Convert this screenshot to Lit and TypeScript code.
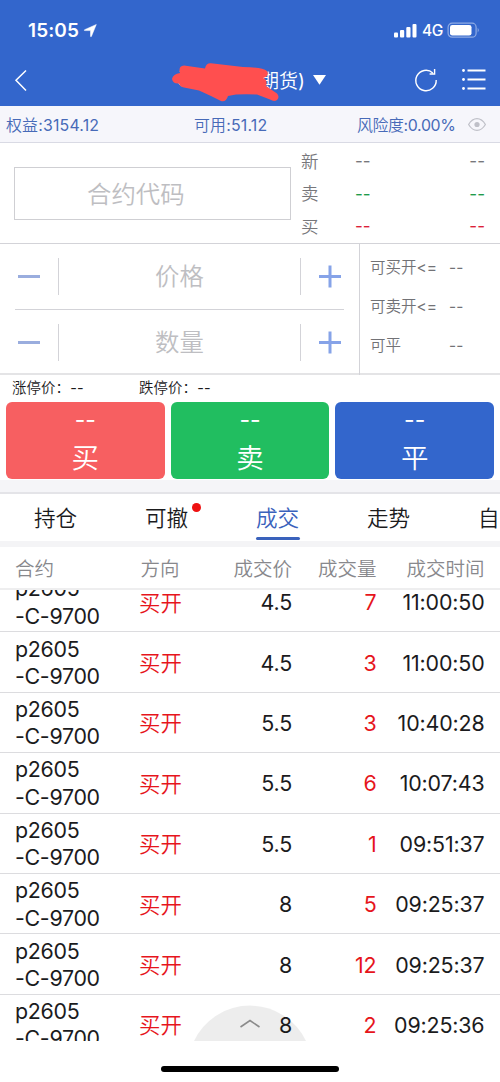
import { LitElement, html, css, svg } from "lit";
import { customElement } from "lit/decorators.js";

interface Trade { price: string; volume: string; time: string; }

const TRADES: Trade[] = [
  { price: "4.5", volume: "7", time: "11:00:50" },
  { price: "4.5", volume: "3", time: "11:00:50" },
  { price: "5.5", volume: "3", time: "10:40:28" },
  { price: "5.5", volume: "6", time: "10:07:43" },
  { price: "5.5", volume: "1", time: "09:51:37" },
  { price: "8", volume: "5", time: "09:25:37" },
  { price: "8", volume: "12", time: "09:25:37" },
  { price: "8", volume: "2", time: "09:25:36" },
];

const minus = svg`<path d="M0 11.5H22" />`;
const plus = svg`<path d="M0 11.5H22M11 .5V22.5" />`;

@customElement("app-root")
export class AppRoot extends LitElement {
  static styles = css`
    :host {
      display: flex;
      flex-direction: column;
      width: 500px;
      height: 1082px;
      overflow: hidden;
      background: #fff;
      color: #1b1b1d;
      font-family: Inter, "Noto Sans CJK SC DemiLight", "Noto Sans CJK SC", sans-serif;
      font-weight: 400;
      font-size: 16px;
    }
    * { box-sizing: border-box; }
    svg { display: block; flex: none; overflow: visible; }
    .top { background: #3366cc; color: #fff; height: 106px; flex: none; }
    .status { height: 54px; padding: 7px 20px 0 28px; display: flex; align-items: center; }
    .clock { font-size: 19px; font-weight: 600; width: 52px; white-space: nowrap; letter-spacing: 0.1px; }
    .arrow { margin-left: 4px; }
    .signal { margin-left: auto; }
    .net { font-size: 15.5px; font-weight: 500; margin: 0 5px 0 5px; width: 21px; white-space: nowrap; letter-spacing: -0.3px; }
    .nav { height: 52px; display: grid; grid-template-columns: 172px 1fr 85px; align-items: center; }
    .back { margin-left: 15px; }
    .account { position: relative; display: flex; align-items: center; height: 52px; padding-left: 88px; font-size: 19px; }
    .owner { padding-bottom: 2px; }
    .caret { margin-left: 8px; }
    .redact { position: absolute; left: 0; top: 0; }
    .tools { display: flex; align-items: center; gap: 25px; }
    .funds {
      flex: none; height: 37px; background: #f6f6fb; border-bottom: 1px solid #d9dae4; color: #476ab8;
      display: grid; grid-template-columns: 188px 163px 106px 1fr; padding: 0 6px; align-items: center;
      font-size: 15.9px; white-space: nowrap; letter-spacing: 0.18px;
    }
    .risk { letter-spacing: -0.35px; }
    .eye { margin-left: 5px; }
    .quote { flex: none; height: 101px; border-bottom: 1px solid #d3d3d8; display: grid; grid-template-columns: 287px 1fr; padding-left: 14px; }
    .code { align-self: center; width: 277px; height: 53px; border: 1px solid #cfcfd3; color: #bebec2; font-size: 24.4px; display: flex; align-items: center; padding: 0 0 2px 72px; }
    .levels { display: grid; grid-template-rows: repeat(3, 32.5px); padding: 2px 15px 0 0; color: #77777b; font-size: 17px; }
    .level { display: grid; grid-template-columns: 54px 1fr auto; align-items: center; }
    .up { color: #dc2038; }
    .down { color: #209a4a; }
    .label { color: #77777b; font-size: 17.5px; padding-bottom: 2px; }
    .form { flex: none; height: 131px; border-bottom: 2px solid #e4e4e6; display: grid; grid-template-columns: 360px 1fr; }
    .entries { border-right: 1px solid #d3d3d8; padding: 0 15px 0 15px; }
    .entry { height: 65px; display: grid; grid-template-columns: 43px 243px 1fr; align-items: center; }
    .entry + .entry { border-top: 1px solid #d3d3d8; height: 66px; }
    .field { height: 37px; border-left: 1px solid #d3d3d8; border-right: 1px solid #d3d3d8; color: #bebec2; font-size: 24.4px; display: flex; align-items: center; justify-content: center; padding-bottom: 4px; }
    .step { stroke: #9aadde; stroke-width: 3; fill: none; }
    .plus { stroke: #86a3e8; margin-left: 18px; }
    .minus { margin-left: 3px; }
    .limits { display: grid; grid-template-rows: repeat(3, 39.2px); padding: 3.500px 0 0 10px; color: #727276; font-size: 15.5px; }
    .limit { display: grid; grid-template-columns: 79px 1fr; align-items: center; }
    .limit span:first-child { padding-bottom: 2px; }
    .bounds { flex: none; height: 27px; display: grid; grid-template-columns: 127px 1fr; align-items: center; padding: 0 12px 4px; font-size: 14.4px; letter-spacing: 0.15px; }
    .actions { flex: none; height: 78px; padding: 0 6px; display: grid; grid-template-columns: repeat(3, 1fr); gap: 6px; }
    .action { height: 77px; border-radius: 6px; color: #fff; display: flex; flex-direction: column; align-items: center; font-size: 27.5px; line-height: 40px; }
    .price { font-size: 23px; line-height: 36px; }
    .buy { background: #f75f61; }
    .sell { background: #21be60; }
    .close { background: #3366cc; }
    .strip { flex: none; height: 14px; background: #f5f5f8; border-bottom: 2px solid #e4e4e8; }
    .tabs { flex: none; height: 47px; display: flex; overflow: hidden; font-size: 21.6px; }
    .tab { position: relative; flex: 0 0 111px; height: 46px; display: flex; flex-direction: column; align-items: center; line-height: 49px; }
    .active { color: #3a62bc; }
    .active::after { content: ""; flex: none; width: 44px; height: 3px; border-radius: 2px; background: #3a62bc; margin-top: -6px; }
    .dot { position: absolute; left: 81px; top: 8.500px; width: 9px; height: 9px; border-radius: 50%; background: #ee1111; }
    .gap { flex: none; height: 6px; background: #f4f4f6; }
    .cols { display: grid; grid-template-columns: 124px 64px 89px 84.500px 108px; padding: 0 15px; align-items: center; }
    .head { flex: none; height: 43px; border-bottom: 2px solid #eeeeef; color: #88888c; font-size: 19.5px; }
    .side { padding-left: 1.500px; }
    .num { text-align: right; white-space: nowrap; }
    .list { position: relative; flex: none; height: 451px; overflow: hidden; }
    .rows { margin-top: -18px; }
    .row { height: 60.4px; border-bottom: 1px solid #dcdcdf; font-size: 21.4px; letter-spacing: -0.3px; }
    .row .num { padding-top: 1px; letter-spacing: -0.15px; }
    .contract { line-height: 27.5px; padding-top: 2px; }
    .red { color: #e6151c; }
    .kind { letter-spacing: 0; padding-bottom: 1px; }
    .handle { position: absolute; left: 194px; bottom: 0; }
    .home { flex: none; width: 178px; height: 6px; border-radius: 3px; background: #000; margin: 25px 0 0 161px; }
  `;

  private level(label: string, cls: string) {
    return html`<div class="level ${cls}"><span class="label">${label}</span><span>--</span><span>--</span></div>`;
  }

  private entry(label: string) {
    return html`<div class="entry">
      <svg class="step minus" width="22" height="23">${minus}</svg>
      <div class="field">${label}</div>
      <svg class="step plus" width="22" height="23">${plus}</svg>
    </div>`;
  }

  render() {
    return html`
      <div class="top">
        <div class="status">
          <span class="clock">15:05</span>
          <svg class="arrow" width="13" height="13" viewBox="0 0 13 13"><path fill="#fff" stroke="#fff" stroke-width=".5" d="M12.300.5 7.4 12.400c-.2.5-.9.4-.9-.1V6.6H.8c-.6 0-.7-.7-.2-.9Z"/></svg>
          <svg class="signal" width="23" height="14" viewBox="0 0 23 14" fill="#fff">
            <rect x="0" y="8.5" width="4" height="5" rx="1"/><rect x="6" y="6" width="4.2" height="7.5" rx="1"/>
            <rect x="12.3" y="3" width="4.2" height="10.500" rx="1"/><rect x="18.5" y="0" width="4" height="13.500" rx="1"/>
          </svg>
          <span class="net">4G</span>
          <svg width="32" height="16" viewBox="0.500 0.7 32 16"><rect x=".6" y=".9" width="28" height="14" rx="4" fill="none" stroke="#8fabe4" stroke-width="1.2"/><rect x="2.5" y="2.7" width="21.5" height="10.5" rx="2.3" fill="#fff"/><path d="M30.2 5.5q2.2 2.4 0 4.8Z" fill="#8fabe4"/></svg>
        </div>
        <div class="nav">
          <svg class="back" width="12" height="21" viewBox="0 0 12 21"><path d="M11 .5 1 10.3 11 20.5" fill="none" stroke="#fff" stroke-width="1.5"/></svg>
          <div class="account">
            <span class="owner">期货)</span>
            <svg class="caret" width="13" height="10" viewBox="0 0 13 10"><path d="M0 0H13L6.5 9.7Z" fill="#fff"/></svg>
            <svg class="redact" width="108" height="52" viewBox="172 54 108 52">
              <path d="M180 70.500 186 73M179 83 183 86" stroke="#fff" stroke-width="2"/>
              <path fill="#ff4f4f" d="M172 79Q173 74 180 73Q178 66 184 65.500L205 68.500Q206 63 211 63.300L243 67Q262 67 267 71Q270 76 263 78Q268 80 266 86L277 93.500Q280 97 277 100Q274 102 270 99.500L257 94.500Q246 94 236 94.500L228 96Q226 102.500 221 101L211 96 199 90.500 184 87.500Q180 87 179 83.500Q173 84 172 79Z"/>
            </svg>
          </div>
          <div class="tools">
            <svg width="22" height="23" viewBox="-.3 .5 22 23" fill="none" stroke="#fff" stroke-width="1.4"><path d="M20.9 11.500A10.200 10.200 0 1 1 17.500 4.400M19.300 .5V5.500H14.300"/></svg>
            <svg width="24" height="22" viewBox="0 0.500 24 22"><path d="M5.500 2H23.500M5.500 11H23.500M5.500 20H23.500" stroke="#fff" stroke-width="2"/><g fill="#fff"><circle cx="1.500" cy="2" r="1.400"/><circle cx="1.500" cy="11" r="1.400"/><circle cx="1.500" cy="20" r="1.400"/></g></svg>
          </div>
        </div>
      </div>
      <div class="funds">
        <span>权益:3154.12</span><span>可用:51.12</span><span class="risk">风险度:0.00%</span>
        <svg class="eye" width="18" height="13" viewBox="0 0 18 13"><path d="M.6 6.500Q4 .7 9 .7T17.400 6.500Q14 12.300 9 12.300T.6 6.500Z" fill="none" stroke="#bfc0c8" stroke-width="1.200"/><circle cx="9" cy="6.500" r="2.600" fill="#bfc0c8"/></svg>
      </div>
      <div class="quote">
        <div class="code">合约代码</div>
        <div class="levels">${this.level("新", "")}${this.level("卖", "down")}${this.level("买", "up")}</div>
      </div>
      <div class="form">
        <div class="entries">${this.entry("价格")}${this.entry("数量")}</div>
        <div class="limits">
          <div class="limit"><span>可买开&lt;=</span><span>--</span></div>
          <div class="limit"><span>可卖开&lt;=</span><span>--</span></div>
          <div class="limit"><span>可平</span><span>--</span></div>
        </div>
      </div>
      <div class="bounds"><span>涨停价：--</span><span>跌停价：--</span></div>
      <div class="actions">
        <div class="action buy"><span class="price">--</span><span>买</span></div>
        <div class="action sell"><span class="price">--</span><span>卖</span></div>
        <div class="action close"><span class="price">--</span><span>平</span></div>
      </div>
      <div class="strip"></div>
      <div class="tabs">
        <div class="tab">持仓</div>
        <div class="tab">可撤<i class="dot"></i></div>
        <div class="tab active">成交</div>
        <div class="tab">走势</div>
        <div class="tab">自选</div>
      </div>
      <div class="gap"></div>
      <div class="cols head">
        <span>合约</span><span class="side">方向</span><span class="num">成交价</span><span class="num">成交量</span><span class="num">成交时间</span>
      </div>
      <div class="list">
        <div class="rows">
          ${TRADES.map((t) => html`<div class="cols row">
            <span class="contract">p2605<br />-C-9700</span><span class="red kind">买开</span>
            <span class="num">${t.price}</span><span class="num red">${t.volume}</span><span class="num">${t.time}</span>
          </div>`)}
        </div>
        <svg class="handle" width="112" height="35" viewBox="0 0 112 35"><path d="M0 35A62 62 0 0 1 112 35Z" fill="#000" fill-opacity=".07"/><path d="M46.500 21 56 14.500 65.500 21" fill="none" stroke="#8b8b8b" stroke-width="1.600"/></svg>
      </div>
      <div class="home"></div>
    `;
  }
}
